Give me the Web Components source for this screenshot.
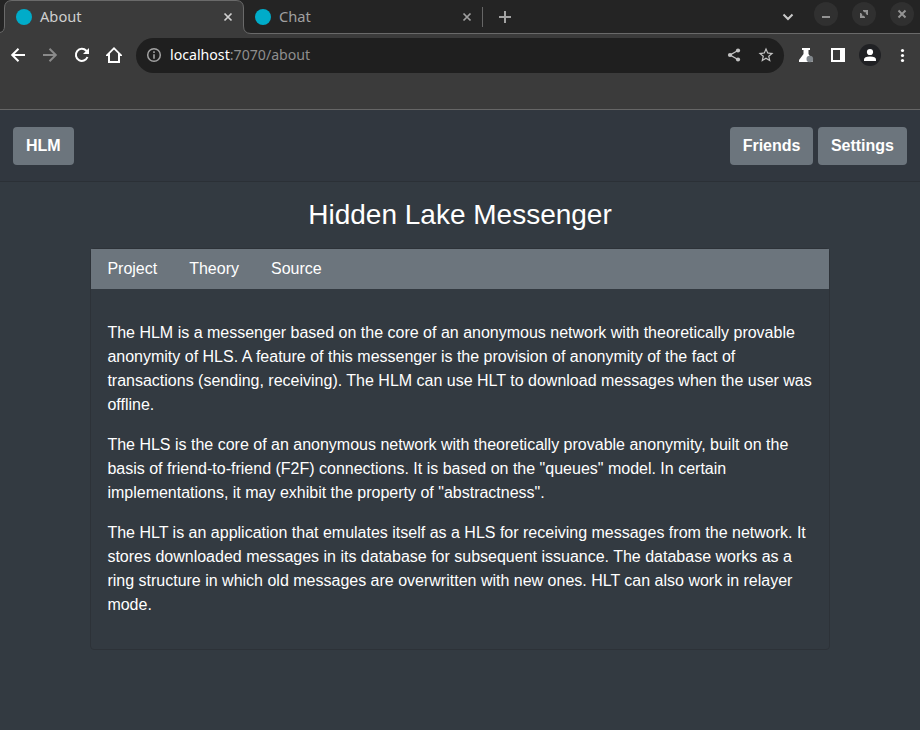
<!DOCTYPE html>
<html lang="en">
<head>
<meta charset="utf-8">
<title>About</title>
<style>
html,body{margin:0;height:100%;overflow:hidden;background:#333a41}
</style>
</head>
<body>
<browser-window></browser-window>
<script>
const define = (name, html) => customElements.define(name, class extends HTMLElement {
  constructor() {
    super();
    const t = document.createElement('template');
    t.innerHTML = html;
    this.attachShadow({ mode: 'open' }).append(t.content.cloneNode(true));
  }
});

define('browser-tab', `
<style>
:host{display:flex;align-items:center;box-sizing:border-box;width:239px;height:34px;padding:0 9px 0 12px;color:var(--tab-color);font:14.67px/20px "Noto Sans",sans-serif}
.dot{width:16px;height:16px;border-radius:50%;background:#00acc9;margin-right:8px}
.label{flex:1;padding-bottom:2px}
svg{display:block}
</style>
<span class="dot"></span><span class="label"><slot></slot></span>
<svg width="12" height="12" viewBox="0 0 12 12" fill="none" stroke="currentColor" stroke-width="1.7"><path d="M2.500 2.500l7 7M9.500 2.500l-7 7"/></svg>`);

define('window-button', `
<style>
:host{display:flex;align-items:center;justify-content:center;width:24px;height:24px;border-radius:50%;background:#303030;color:#939393}
</style><slot></slot>`);

define('tab-strip', `
<style>
:host{display:flex;position:relative;height:34px;background:#242424}
.shape{position:absolute;left:0;top:0}
browser-tab{position:relative;--tab-color:#a0a0a0}
browser-tab.active{margin-left:4px;--tab-color:#cfcfcf}
.sep{width:1px;height:20px;margin-top:7px;background:#666}
.plus{margin:10px 0 0 15px}
.spacer{flex:1}
.chev{margin:12px 20px 0 0}
.win{display:flex;gap:14px;margin:2px 6px 0 0}
svg{display:block}
</style>
<svg class="shape" width="920" height="34" viewBox="0 0 920 34"><path d="M0 33C3 32 4.500 30 4.500 26V8Q4.500 .5 12 .5H236Q243.500 .5 243.500 8V26Q243.500 33.500 251 33.500H920V34H0Z" fill="#3b3b3b"/><path d="M0 32.500C3 32 4.500 30 4.500 26V8Q4.500 .5 12 .5H236Q243.500 .5 243.500 8V26Q243.500 33.500 251 33.500H920" fill="none" stroke="#6a6a6a"/></svg>
<browser-tab class="active">About</browser-tab>
<browser-tab>Chat</browser-tab>
<span class="sep"></span>
<svg class="plus" width="14" height="14" viewBox="0 0 14 14" stroke="#a3a3a3" stroke-width="2"><path d="M1 7H13M7 1V13"/></svg>
<span class="spacer"></span>
<svg class="chev" width="12" height="10" viewBox="0 0 12 10" fill="none" stroke="#c9c9c9" stroke-width="2"><path d="M1.500 2.500L6 7L10.500 2.500"/></svg>
<div class="win">
<window-button><svg width="12" height="12" viewBox="0 0 12 12"><path d="M2 8H10V10H2Z" fill="currentColor"/></svg></window-button>
<window-button><svg width="12" height="12" viewBox="0 0 12 12" fill="currentColor"><path d="M5 2H10V7H9L7.800 5.800V4.200H6.200L5 3ZM2 5H3L4.200 6.200V7.800H5.800L7 9V10H2Z"/></svg></window-button>
<window-button><svg width="12" height="12" viewBox="0 0 12 12" stroke="currentColor" stroke-width="2"><path d="M2.500 2.500L9.500 9.500M9.500 2.500L2.500 9.500"/></svg></window-button>
</div>`);

define('address-bar', `
<style>
:host{display:flex;align-items:center;box-sizing:border-box;width:648px;height:35px;padding:0 9px 1px 9px;border-radius:18px;background:#1f1f1f;color:#8e8e8e;font:14.15px/20px "Noto Sans",sans-serif}
.url{flex:1;margin-left:7px;white-space:nowrap;padding-bottom:1px}
b{font-weight:400;color:#fff}
svg{display:block}
.share{margin-right:14px}
</style>
<svg width="18" height="18" viewBox="0 0 18 18"><circle cx="9" cy="9" r="6.300" fill="none" stroke="#a2a2a2" stroke-width="1.500"/><path d="M8.200 5.300H9.800V6.900H8.200ZM8.200 8.200H9.800V12.700H8.200Z" fill="#a2a2a2"/></svg>
<span class="url"><b>localhost</b>:7070/about</span>
<svg class="share" width="18" height="18" viewBox="0 0 18 18" fill="#c3c3c3" stroke="#c3c3c3"><path d="M13 4.500L5 9L13 13.500" fill="none" stroke-width="1.400"/><g stroke="none"><circle cx="13" cy="4.500" r="2.100"/><circle cx="5" cy="9" r="2.100"/><circle cx="13" cy="13.500" r="2.100"/></g></svg>
<svg width="18" height="18" viewBox="0 0 24 24" fill="#c3c3c3"><path d="M22 9.240l-7.190-.62L12 2 9.190 8.630 2 9.240l5.460 4.730L5.820 21 12 17.270 18.180 21l-1.630-7.030L22 9.240zM12 15.400l-3.760 2.270 1-4.280-3.320-2.880 4.380-.38L12 6.100l1.710 4.040 4.380.38-3.320 2.880 1 4.280L12 15.400z"/></svg>`);

define('browser-toolbar', `
<style>
:host{display:flex;box-sizing:border-box;height:76px;padding:4px 8px 0 8px;border-bottom:1px solid #666;background:#3b3b3b}
.row{display:flex;align-items:center;height:35px;width:100%}
.nav{display:flex;gap:12px;margin-right:12px;padding-bottom:1px}
.tools{display:flex;align-items:center;margin-left:12px;padding-bottom:1px}
svg{display:block}
</style>
<div class="row"><div class="nav">
<svg width="20" height="20" viewBox="0 0 20 20" fill="none" stroke="#fff" stroke-width="2"><path d="M17 10H4.500M10.500 3.700L4.200 10L10.500 16.300"/></svg>
<svg width="20" height="20" viewBox="0 0 20 20" fill="none" stroke="#8a8a8a" stroke-width="2"><path d="M3 10H15.500M9.500 3.700L15.800 10L9.500 16.300"/></svg>
<svg width="20" height="20" viewBox="0 0 20 20"><path d="M15.500 12A6 6 0 1 1 14.300 5.800L16 7.500" fill="none" stroke="#fff" stroke-width="2"/><path d="M17 3V9H11Z" fill="#fff"/></svg>
<svg width="20" height="20" viewBox="0 0 20 20"><path fill-rule="evenodd" d="M10 2L18 10V11H16V18H4V11H2V10ZM10 4.600L6 8.600V16H14V8.600Z" fill="#fff"/></svg>
</div>
<address-bar></address-bar>
<div class="tools">
<svg width="20" height="20" viewBox="0 0 20 20"><path d="M6 3H14V5H12.500V9L16.500 15V17H3V15L7.500 9V5H6Z" fill="#fff"/><circle cx="13.800" cy="14" r="3.300" fill="#80868b"/></svg>
<svg style="margin-left:12px" width="20" height="20" viewBox="0 0 20 20"><path fill-rule="evenodd" d="M3 3H17V17H3ZM5 5V15H12V5Z" fill="#fff"/></svg>
<svg style="margin-left:11px" width="22" height="22" viewBox="0 0 22 22"><circle cx="11" cy="11" r="11" fill="#202124"/><circle cx="11" cy="8" r="3.100" fill="#fff"/><path d="M5 17V15.500Q5 12.500 11 12.500T17 15.500V17Z" fill="#fff"/></svg>
<svg style="margin-left:11px" width="20" height="20" viewBox="0 0 20 20" fill="#fff"><circle cx="10.500" cy="5.500" r="1.600"/><circle cx="10.500" cy="10.500" r="1.600"/><circle cx="10.500" cy="15.500" r="1.600"/></svg>
</div></div>`);

define('nav-button', `
<style>
:host{display:block;box-sizing:border-box;height:38px;padding:7px 13px;border-radius:4px;background:#6c757d;color:#fff;font:bold 16px/24px "Liberation Sans",Arial,sans-serif}
</style><slot></slot>`);

define('site-header', `
<style>
:host{display:flex;box-sizing:border-box;height:72px;padding:17px 13px 0;background:#31373f;border-bottom:1px solid #2b3036}
.right{display:flex;gap:4.45px;margin-left:auto}
</style>
<nav-button>HLM</nav-button>
<div class="right"><nav-button>Friends</nav-button><nav-button>Settings</nav-button></div>`);

define('info-card', `
<style>
:host{display:block;box-sizing:border-box;width:740px;height:402px;margin:0 auto;border:1px solid #2d3238;border-radius:4px;color:#fff;font:16px/24px "Liberation Sans",Arial,sans-serif}
nav{display:flex;height:40px;padding-left:.4px;background:#6c757d}
nav ::slotted(a){padding:8px 16px}
.body{padding:32px 15.600px 0 16.400px}
.body ::slotted(p){margin:0 0 16px}
</style>
<nav><slot name="link"></slot></nav><div class="body"><slot></slot></div>`);

define('about-page', `
<style>
:host{display:block;flex:1}
h1{margin:16px 0 16px;text-align:center;color:#fff;font:400 28px/34px "Liberation Sans",Arial,sans-serif}
</style>
<site-header></site-header>
<h1>Hidden Lake Messenger</h1>
<info-card>
<a slot="link">Project</a><a slot="link">Theory</a><a slot="link">Source</a>
<p>The HLM is a messenger based on the core of an anonymous network with theoretically provable anonymity of HLS. A feature of this messenger is the provision of anonymity of the fact of transactions (sending, receiving). The HLM can use HLT to download messages when the user was offline.</p>
<p>The HLS is the core of an anonymous network with theoretically provable anonymity, built on the basis of friend-to-friend (F2F) connections. It is based on the "queues" model. In certain implementations, it may exhibit the property of "abstractness".</p>
<p>The HLT is an application that emulates itself as a HLS for receiving messages from the network. It stores downloaded messages in its database for subsequent issuance. The database works as a ring structure in which old messages are overwritten with new ones. HLT can also work in relayer mode.</p>
</info-card>`);

define('browser-window', `
<style>:host{display:flex;flex-direction:column;width:920px;height:730px;background:#333a41}</style>
<tab-strip></tab-strip><browser-toolbar></browser-toolbar><about-page></about-page>`);
</script>
</body>
</html>
